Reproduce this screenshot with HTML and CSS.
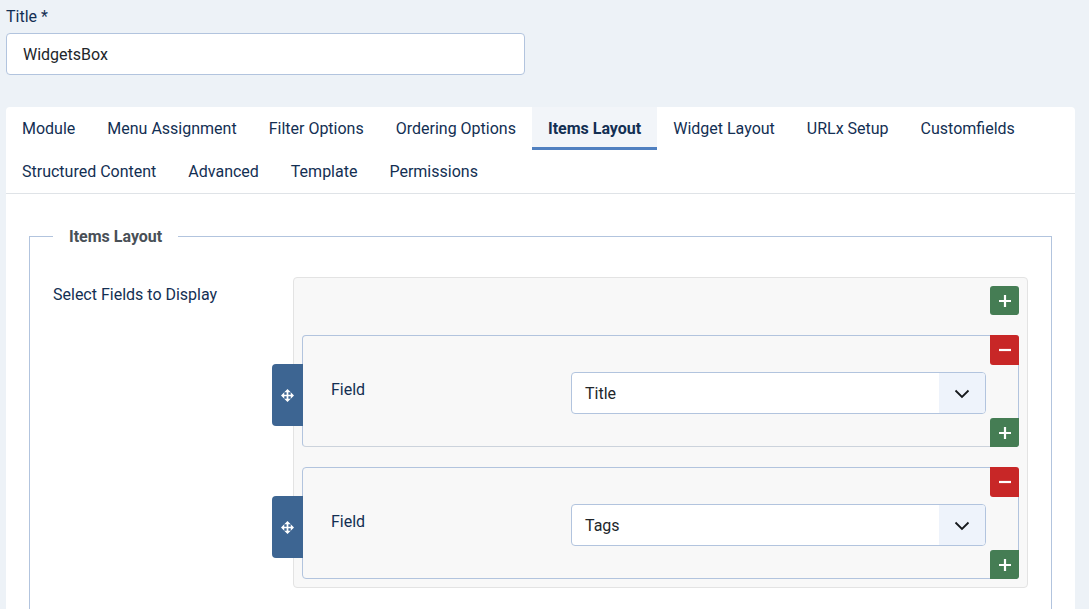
FILE: index.html
```html
<!DOCTYPE html>
<html lang="en">
<head>
    <meta charset="UTF-8" />
    <title>WidgetsBox - Module</title>
    <link rel="stylesheet" href="styles.css">
</head>
<body>
    <div class="title-field">
        <label class="title-label" for="jform_title">Title *</label>
        <input id="jform_title" class="form-input" type="text" value="WidgetsBox" />
    </div>

    <div class="card">
        <div class="tabs">
            <button class="tab">Module</button>
            <button class="tab">Menu Assignment</button>
            <button class="tab">Filter Options</button>
            <button class="tab">Ordering Options</button>
            <button class="tab active">Items Layout</button>
            <button class="tab">Widget Layout</button>
            <button class="tab">URLx Setup</button>
            <button class="tab">Customfields</button>
            <button class="tab">Structured Content</button>
            <button class="tab">Advanced</button>
            <button class="tab">Template</button>
            <button class="tab">Permissions</button>
        </div>

        <div class="tab-body">
            <fieldset class="options">
                <legend>Items Layout</legend>
                <div class="control-group">
                    <div class="control-label">Select Fields to Display</div>
                    <div class="subform">
                        <div class="subform-top">
                            <button class="btn btn-add" aria-label="Add">
                                <svg viewBox="0 0 12 12"><path d="M6 0v12M0 6h12" /></svg>
                            </button>
                        </div>

                        <div class="subform-row">
                            <button class="handle" aria-label="Move">
                                <svg viewBox="0 0 12 12"><path class="fill" d="M6 0 9 3H6.8V5.2H9V3L12 6 9 9V6.8H6.8V9H9L6 12 3 9H5.2V6.8H3V9L0 6 3 3V5.2H5.2V3H3Z" /></svg>
                            </button>
                            <span class="field-label">Field</span>
                            <div class="select">
                                <span>Title</span>
                                <span class="select-arrow">
                                    <svg viewBox="0 0 16 10"><path d="M1.5 1.5 8 8l6.5-6.5" /></svg>
                                </span>
                            </div>
                            <button class="btn btn-remove" aria-label="Remove">
                                <svg viewBox="0 0 12 12"><path d="M0 6h12" /></svg>
                            </button>
                            <button class="btn btn-add btn-row-add" aria-label="Add">
                                <svg viewBox="0 0 12 12"><path d="M6 0v12M0 6h12" /></svg>
                            </button>
                        </div>

                        <div class="subform-row">
                            <button class="handle" aria-label="Move">
                                <svg viewBox="0 0 12 12"><path class="fill" d="M6 0 9 3H6.8V5.2H9V3L12 6 9 9V6.8H6.8V9H9L6 12 3 9H5.2V6.8H3V9L0 6 3 3V5.2H5.2V3H3Z" /></svg>
                            </button>
                            <span class="field-label">Field</span>
                            <div class="select">
                                <span>Tags</span>
                                <span class="select-arrow">
                                    <svg viewBox="0 0 16 10"><path d="M1.5 1.5 8 8l6.5-6.5" /></svg>
                                </span>
                            </div>
                            <button class="btn btn-remove" aria-label="Remove">
                                <svg viewBox="0 0 12 12"><path d="M0 6h12" /></svg>
                            </button>
                            <button class="btn btn-add btn-row-add" aria-label="Add">
                                <svg viewBox="0 0 12 12"><path d="M6 0v12M0 6h12" /></svg>
                            </button>
                        </div>
                    </div>
                </div>
            </fieldset>
        </div>
    </div>
</body>
</html>
```

FILE: styles.css
```css
html, body {
    margin: 0;
    padding: 0;
    height: 100%;
    overflow: hidden;
}

body {
    background: #edf2f7;
    font-family: Roboto, sans-serif;
    font-size: 16px;
    color: #132f53;
}

.title-field {
    padding: 5px 564px 0 6px;
}

.title-label {
    display: block;
    height: 28px;
    line-height: 23px;
}

.form-input {
    display: block;
    width: 100%;
    height: 42px;
    box-sizing: border-box;
    padding: 0 16px;
    background: #fff;
    border: 1px solid #b2c4de;
    border-radius: 4px;
    font-family: inherit;
    font-size: 16px;
    color: #22262a;
}

.card {
    margin: 32px 14px 0 6px;
    background: #fff;
    border-radius: 4px 4px 0 0;
}

.tabs {
    display: flex;
    flex-wrap: wrap;
    border-bottom: 1px solid #dfe3e7;
}

.tab {
    height: 43px;
    padding: 2px 16px 0;
    background: none;
    border: 0;
    border-bottom: 3px solid transparent;
    font-family: inherit;
    font-size: 16px;
    color: #132f53;
}

.tab.active {
    background: #f2f5f9;
    border-bottom-color: #5080c0;
    font-weight: 700;
}

.tab-body {
    padding: 31px 23px 0;
}

.options {
    margin: 0;
    padding: 30px 23px 40px;
    border: 1px solid #b2c4de;
    min-width: 0;
}

.options legend {
    padding: 2px 16px 0;
    font-weight: 700;
    color: #495057;
    line-height: 20px;
}

.control-group {
    display: flex;
    align-items: flex-start;
}

.control-label {
    width: 240px;
    padding-top: 8px;
    line-height: 19px;
}

.subform {
    flex: 1;
    box-sizing: border-box;
    height: 311px;
    padding: 8px 8px 0;
    background: #f8f8f8;
    border: 1px solid #e3e3e3;
    border-radius: 4px;
}

.subform-top {
    display: flex;
    justify-content: flex-end;
    height: 49px;
}

.subform-row {
    position: relative;
    display: flex;
    align-items: center;
    box-sizing: border-box;
    height: 112px;
    margin-bottom: 20px;
    padding: 0 32px 4px 28px;
    border: 1px solid #b2c4de;
    border-bottom-color: #ccd3dc;
    border-radius: 4px;
}

.subform-row:last-child {
    border-bottom-color: #b2c4de;
    margin-bottom: 0;
}

.field-label {
    width: 240px;
}

.select {
    display: flex;
    align-items: center;
    justify-content: space-between;
    flex: 1;
    box-sizing: border-box;
    height: 42px;
    padding-left: 13px;
    margin-top: 8px;
    background: #fff;
    border: 1px solid #b2c4de;
    border-radius: 4px;
    overflow: hidden;
    color: #22262a;
}

.select-arrow {
    display: flex;
    align-items: center;
    justify-content: center;
    box-sizing: border-box;
    width: 46px;
    height: 100%;
    padding: 2px 1px 0 0;
    background: #eef3fb;
}

.select-arrow svg {
    width: 16px;
    height: 10px;
    fill: none;
    stroke: #16191c;
    stroke-width: 1.8;
}

.btn {
    display: flex;
    align-items: center;
    justify-content: center;
    width: 29px;
    height: 29px;
    padding: 0;
    border: 0;
    border-radius: 3px;
}

.btn svg {
    width: 12px;
    height: 12px;
    fill: none;
    stroke: #fff;
    stroke-width: 2.2;
}

.btn-add {
    background: #457d54;
}

.btn-remove {
    position: absolute;
    top: -1px;
    right: -1px;
    height: 30px;
    background: #c82727;
    border-radius: 0 3px 0 3px;
}

.btn-row-add {
    position: absolute;
    right: -1px;
    bottom: -1px;
    border-radius: 3px 0 3px 0;
}

.handle {
    position: absolute;
    left: -31px;
    top: 28px;
    display: flex;
    align-items: center;
    justify-content: center;
    box-sizing: border-box;
    width: 31px;
    height: 62px;
    padding: 0 1px 0 0;
    background: #3d6592;
    border: 0;
    border-radius: 4px 0 0 4px;
}

.handle svg {
    width: 13px;
    height: 13px;
}

.handle .fill {
    fill: #fff;
}
```
